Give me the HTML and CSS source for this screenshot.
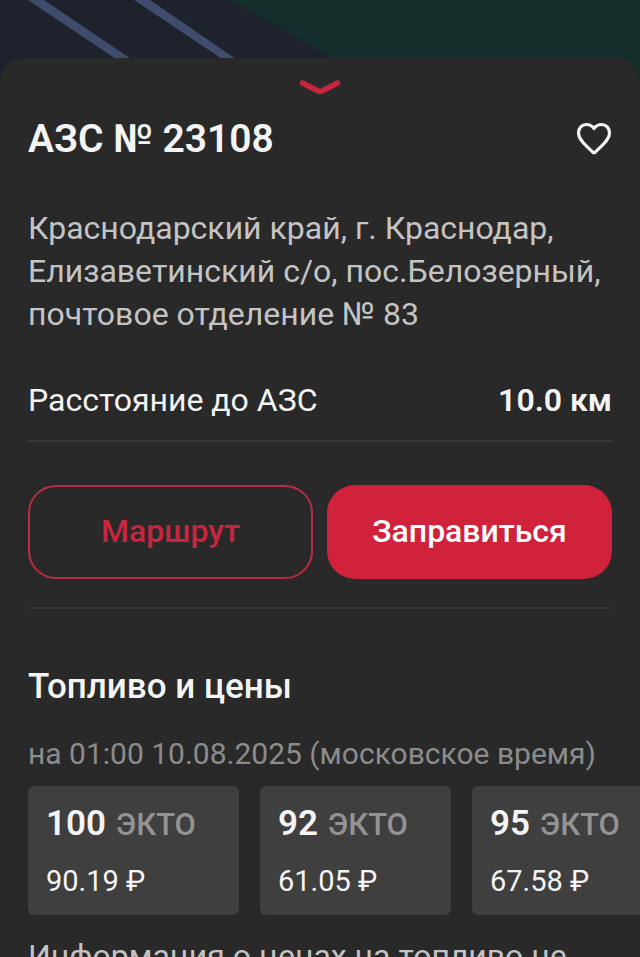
FILE: index.html
```html
<!DOCTYPE html>
<html lang="ru">
<head>
    <meta charset="UTF-8">
    <meta name="viewport" content="width=device-width, initial-scale=1.0">
    <title>АЗС № 23108</title>
    <link rel="stylesheet" href="styles.css">
</head>
<body>
    <div class="map">
        <svg class="map-roads" width="390" height="90" viewBox="0 0 390 90" aria-hidden="true">
            <path d="M0 0H231L333 59L387 90H0Z" fill="#1d222d"/>
            <path d="M28 0H44L131 59L177 90H161L116 59Z" fill="#404c6c"/>
            <path d="M134 0H150L236 59L281 90H266L222 59Z" fill="#404c6c"/>
        </svg>
    </div>

    <main class="sheet">
        <button class="collapse" type="button" aria-label="Свернуть">
            <svg width="42" height="16" viewBox="0 0 42 16">
                <path d="M3.500 4L19 12Q21 13 23 12L38.500 4" fill="none" stroke="#c9253f" stroke-width="5.500" stroke-linecap="round" stroke-linejoin="round"/>
            </svg>
        </button>

        <header class="header">
            <h1>АЗС № 23108</h1>
            <button class="favorite" type="button" aria-label="В избранное">
                <svg width="36" height="34" viewBox="0 0 36 34">
                    <path d="M18 6.500C16.200 4 13.500 2.500 10.500 2.500C5.800 2.500 2.500 6.200 2.500 11C2.500 16.300 6.500 20.300 11 24.700L16.800 30.200Q18 31.200 19.200 30.200L25 24.700C29.500 20.300 33.500 16.300 33.500 11C33.500 6.200 30.200 2.500 25.500 2.500C22.500 2.500 19.800 4 18 6.500Z" fill="none" stroke="#f4f4f4" stroke-width="3.200" stroke-linejoin="round"/>
                </svg>
            </button>
        </header>

        <p class="address">Краснодарский край, г. Краснодар, Елизаветинский с/о, пос.Белозерный, почтовое отделение № 83</p>

        <div class="distance">
            <span>Расстояние до АЗС</span>
            <strong>10.0 км</strong>
        </div>

        <div class="actions">
            <button class="btn btn-outline" type="button">Маршрут</button>
            <button class="btn btn-primary" type="button">Заправиться</button>
        </div>

        <section class="fuel">
            <h2>Топливо и цены</h2>
            <p class="date">на 01:00 10.08.2025 (московское время)</p>
            <ul class="prices">
                <li class="price-card wide">
                    <div class="grade"><b>100</b> ЭКТО</div>
                    <div class="price">90.19 ₽</div>
                </li>
                <li class="price-card">
                    <div class="grade"><b>92</b> ЭКТО</div>
                    <div class="price">61.05 ₽</div>
                </li>
                <li class="price-card">
                    <div class="grade"><b>95</b> ЭКТО</div>
                    <div class="price">67.58 ₽</div>
                </li>
            </ul>
            <p class="note">Информация о ценах на топливо не</p>
        </section>
    </main>
</body>
</html>
```
FILE: styles.css
```css
* {
    box-sizing: border-box;
}
body {
    margin: 0;
    background: #292929;
    color: #f4f4f4;
    font-family: Roboto, sans-serif;
    font-size: 32px;
    line-height: 43px;
    overflow-x: hidden;
}
h1, h2, p, ul {
    margin: 0;
    padding: 0;
}
button {
    padding: 0;
    border: none;
    background: none;
    font-family: inherit;
    cursor: pointer;
}
svg {
    display: block;
}
.map {
    height: 90px;
    background: #152e2b;
    overflow: hidden;
}
.sheet {
    position: relative;
    margin-top: -32px;
    padding: 21px 28px 0;
    background: #292929;
    border-radius: 24px 24px 0 0;
}
.collapse {
    display: block;
    margin: 0 auto;
}
.header {
    display: flex;
    justify-content: space-between;
    align-items: center;
    margin-top: 20px;
}
h1 {
    font-size: 39px;
    line-height: 48px;
    font-weight: 600;
}
.address {
    margin-top: 44px;
    color: #c4c4c4;
}
.distance {
    display: flex;
    justify-content: space-between;
    margin-top: 43px;
    padding-bottom: 18px;
    border-bottom: 2px solid #383838;
}
.distance strong {
    font-weight: 600;
}
.actions {
    display: grid;
    grid-template-columns: 1fr 1fr;
    gap: 14px;
    padding: 43px 0 28px;
    border-bottom: 2px solid #383838;
}
.btn {
    height: 94px;
    padding-bottom: 2px;
    border-radius: 28px;
    font-size: 32px;
    font-weight: 500;
}
.btn-outline {
    border: 2px solid #b72d42;
    color: #c9253f;
}
.btn-primary {
    background: #d1223b;
    color: #fff;
}
.fuel {
    margin-top: 56px;
}
h2 {
    font-size: 35px;
    line-height: 43px;
    font-weight: 500;
}
.date {
    margin-top: 24px;
    color: #8c8c8c;
    font-size: 30px;
}
.prices {
    display: flex;
    gap: 21px;
    margin: 11px -28px 0 0;
    list-style: none;
    overflow-x: auto;
    scrollbar-width: none;
}
.price-card {
    flex: none;
    width: 191px;
    height: 129px;
    padding: 16px 18px;
    background: #3f3f3f;
    border-radius: 6px;
    white-space: nowrap;
}
.price-card.wide {
    width: 211px;
}
.grade {
    color: #939393;
    font-size: 31px;
    font-weight: 500;
}
.grade b {
    margin-right: 2px;
    color: #f4f4f4;
    font-size: 35px;
    font-weight: 600;
}
.price {
    margin-top: 14px;
    font-size: 29px;
}
.note {
    margin-top: 20px;
    color: #c4c4c4;
}
```
